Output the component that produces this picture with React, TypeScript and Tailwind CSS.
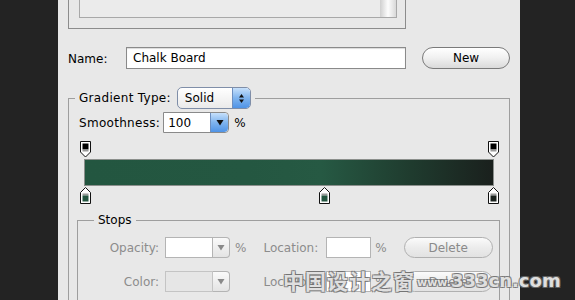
import React from "react";

const font = { fontFamily: '"DejaVu Sans", "Noto Sans CJK SC", sans-serif' };

function TopStop() {
  return (
    <svg width="12" height="17" viewBox="0 0 12 17">
      <path d="M0.5 0.5 H10.5 V11 L5.5 16 L0.5 11 Z" fill="#fff" stroke="#111" />
      <rect x="2.5" y="2.5" width="6" height="6" fill="#000" />
      <rect x="2.5" y="8.5" width="6" height="2" fill="#9a9a9a" />
    </svg>
  );
}

function BottomStop({ color }: { color: string }) {
  return (
    <svg width="12" height="17" viewBox="0 0 12 17">
      <path d="M5.5 0.5 L10.5 5.5 V16.5 H0.5 V5.5 Z" fill="#fff" stroke="#111" />
      <rect x="2.5" y="6.5" width="6" height="2" fill="#9a9a9a" />
      <rect x="2.5" y="8.5" width="6" height="6" fill={color} />
    </svg>
  );
}

function BlueArrow({ updown }: { updown?: boolean }) {
  return (
    <div className="flex h-full w-[18px] items-center justify-center rounded-r-[4px] border-l border-[#6d8fc0] bg-gradient-to-b from-[#c6e0fb] via-[#7fb4ee] to-[#4f93e6]">
      {updown ? (
        <svg width="7" height="11" viewBox="0 0 7 11">
          <path d="M3.5 1 L6 4.5 H1 Z" fill="#111" />
          <path d="M3.5 10 L6 6.5 H1 Z" fill="#111" />
        </svg>
      ) : (
        <svg width="8" height="7" viewBox="0 0 8 7">
          <path d="M0.5 1 H7.5 L4 6.5 Z" fill="#111" />
        </svg>
      )}
    </div>
  );
}

function GreyArrow() {
  return (
    <div className="flex h-full w-[17px] items-center justify-center rounded-r-[4px] border border-l-0 border-[#b4b4b4] bg-gradient-to-b from-[#fafafa] to-[#e4e4e4]">
      <svg width="8" height="7" viewBox="0 0 8 7">
        <path d="M0.5 1 H7.5 L4 6.5 Z" fill="#8a8a8a" />
      </svg>
    </div>
  );
}

function DeleteBtn() {
  return (
    <div className="ml-[17px] flex h-[21px] w-[89px] items-center justify-center rounded-full border border-[#b0b0b0] bg-gradient-to-b from-[#fbfbfb] via-[#ececec] to-[#e2e2e2] text-[12px] text-[#8a8a8a]">
      Delete
    </div>
  );
}

export default function App() {
  return (
    <div className="relative flex h-[300px] w-[575px] overflow-hidden bg-[#232323]" style={font}>
      <div className="ml-[58px] flex h-[300px] w-[462px] shrink-0 flex-col overflow-hidden bg-[#e8e8e8] pl-[10px] text-[12px] text-black">
        {/* top list box */}
        <div className="h-[29px] w-[338px] shrink-0 border border-t-0 border-[#8c8c8c] pl-[10px] pr-[8px]">
          <div className="flex h-[18px] justify-end border border-t-0 border-[#a8a8a8] bg-[#ebebeb]">
            <div className="h-full w-[16px] bg-gradient-to-r from-[#cfcfcf] via-[#fdfdfd] to-[#d8d8d8]" />
          </div>
        </div>

        {/* name row */}
        <div className="mt-[18px] flex h-[22px] shrink-0 items-center">
          <span className="w-[58px] pt-[1px]">Name:</span>
          <div className="flex h-[22px] w-[280px] items-center border border-[#8a8a8a] bg-white pl-[6px] shadow-[inset_0_1px_1px_rgba(0,0,0,0.15)]">
            Chalk Board
          </div>
          <div className="ml-[16px] flex h-[22px] w-[88px] items-center justify-center rounded-full border border-[#7a7a7a] bg-gradient-to-b from-[#ffffff] via-[#f0f0f0] to-[#dadada] text-[12px]">
            New
          </div>
        </div>

        {/* gradient fieldset */}
        <fieldset className="mt-[18px] h-[260px] w-[442px] shrink-0 border border-[#9e9e9e] px-0">
          <legend className="ml-[6px] flex items-center px-[4px]">
            <span className="mr-[6px] tracking-[0.3px]">Gradient Type:</span>
            <div className="flex h-[22px] w-[74px] items-center overflow-hidden rounded-[5px] border border-[#7f8ea8] bg-gradient-to-b from-[#ffffff] to-[#eaeaea]">
              <span className="flex-1 pl-[7px]">Solid</span>
              <BlueArrow updown />
            </div>
          </legend>

          <div className="ml-[10px] mt-[3px] flex h-[21px] items-center">
            <span className="mr-[3px] tracking-[0.3px]">Smoothness:</span>
            <div className="flex h-[21px] w-[66px] items-center overflow-hidden rounded-r-[4px] border border-[#8a8a8a] bg-white">
              <span className="flex-1 pl-[4px]">100</span>
              <BlueArrow />
            </div>
            <span className="ml-[5px]">%</span>
          </div>

          {/* gradient editor */}
          <div className="ml-[15px] mt-[8px] w-[410px]">
            <div className="relative h-[17px]">
              <div className="absolute left-[-4px] top-0">
                <TopStop />
              </div>
              <div className="absolute right-[-6px] top-0">
                <TopStop />
              </div>
            </div>
            <div
              className="mt-[1px] h-[27px] border border-[#8b8f8c]"
              style={{
                background:
                  "linear-gradient(to right, #235640 0%, #245741 40%, #265943 58%, #1f3b2e 80%, #1a201d 100%)",
              }}
            />
            <div className="relative h-[17px]">
              <div className="absolute left-[-4px] top-[1px]">
                <BottomStop color="#245641" />
              </div>
              <div className="absolute left-[235px] top-[1px]">
                <BottomStop color="#235640" />
              </div>
              <div className="absolute right-[-6px] top-[1px]">
                <BottomStop color="#1b221e" />
              </div>
            </div>
          </div>

          {/* stops fieldset */}
          <fieldset className="ml-[8px] mr-[9px] mt-[8px] h-[120px] border border-[#9e9e9e] px-0">
            <legend className="ml-[16px] px-[4px]">Stops</legend>
            <div className="mt-[8px] flex h-[21px] items-center text-[#8c8c8c]">
              <span className="w-[81px] text-right">Opacity:</span>
              <div className="ml-[6px] flex h-[21px] items-center">
                <div className="h-full w-[48px] border border-[#b4b4b4] bg-white" />
                <GreyArrow />
              </div>
              <span className="ml-[5px]">%</span>
              <span className="ml-[17px]">Location:</span>
              <div className="ml-[8px] h-[21px] w-[45px] border border-[#b4b4b4] bg-white" />
              <span className="ml-[4px]">%</span>
              <DeleteBtn />
            </div>
            <div className="mt-[13px] flex h-[21px] items-center text-[#8c8c8c]">
              <span className="w-[81px] text-right">Color:</span>
              <div className="ml-[6px] flex h-[21px] items-center">
                <div className="h-full w-[48px] border border-[#c4c4c4] bg-[#e6e6e6]" />
                <GreyArrow />
              </div>
              <span className="ml-[5px] opacity-0">%</span>
              <span className="ml-[17px]">Location:</span>
              <div className="ml-[8px] h-[21px] w-[45px] border border-[#b4b4b4] bg-white" />
              <span className="ml-[4px]">%</span>
              <DeleteBtn />
            </div>
          </fieldset>
        </fieldset>
      </div>

      {/* watermark */}
      <div
        className="pointer-events-none absolute left-[283px] top-[266px] flex items-end whitespace-nowrap"
        style={{
          color: "rgba(255,255,255,0.8)",
          textShadow:
            "1px 1px 0 rgba(110,110,110,0.75), -1px -1px 0 rgba(110,110,110,0.75), 1px -1px 0 rgba(110,110,110,0.75), -1px 1px 0 rgba(110,110,110,0.75)",
        }}
      >
        <span className="text-[21px] font-bold leading-[28px] tracking-[1px]" style={{ fontFamily: '"Noto Sans CJK SC", sans-serif' }}>
          中国设计之窗
        </span>
        <span className="ml-[2px] text-[11px] font-bold leading-[22px]" style={{ fontFamily: '"DejaVu Sans", sans-serif' }}>
          www.
        </span>
        <span className="text-[18px] font-bold leading-[26px]" style={{ fontFamily: '"DejaVu Sans", sans-serif' }}>
          333cn.com
        </span>
      </div>
    </div>
  );
}
